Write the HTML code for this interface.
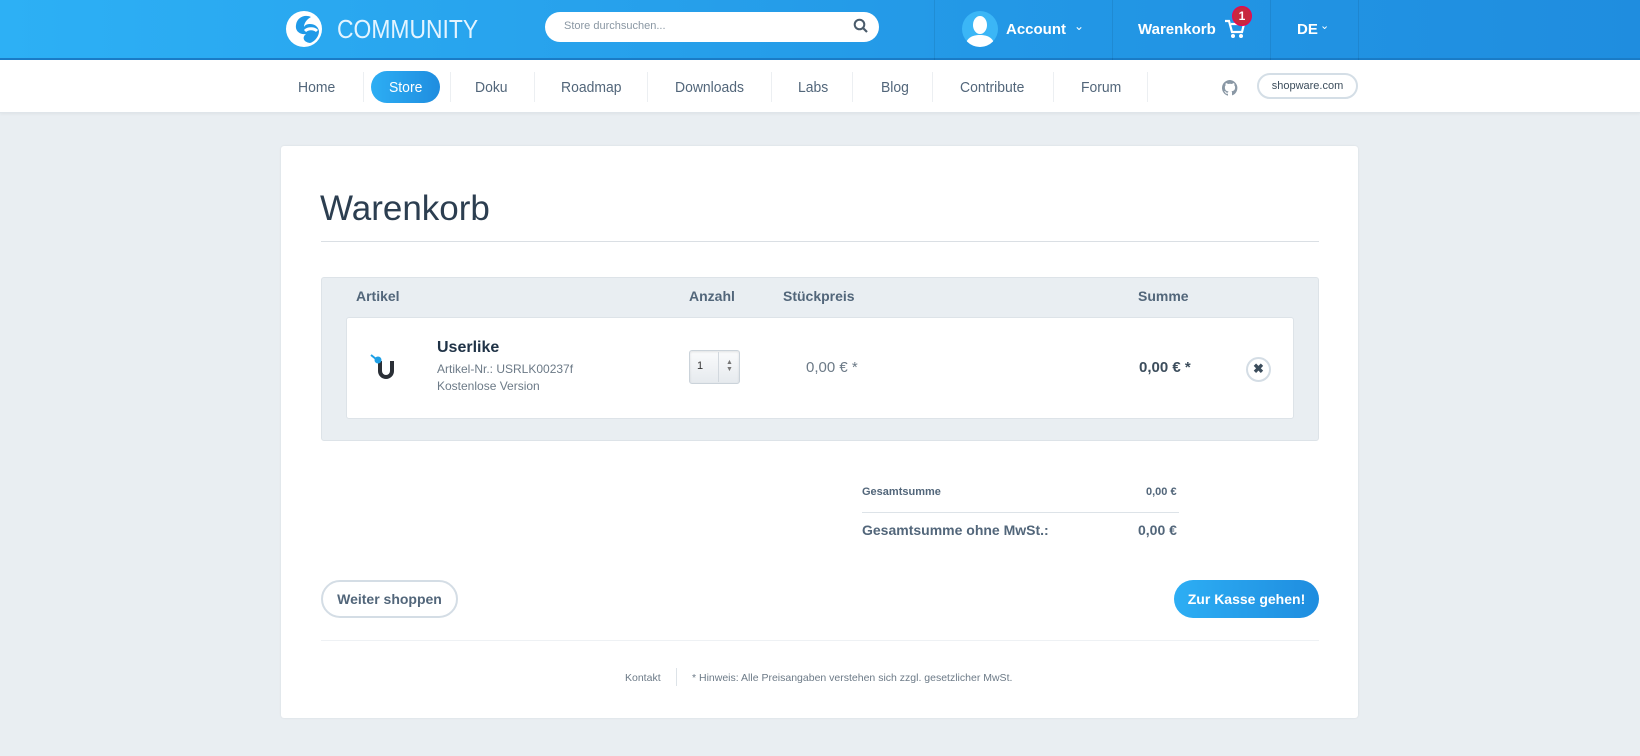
<!DOCTYPE html>
<html><head><meta charset="utf-8"><style>
*{margin:0;padding:0;box-sizing:border-box}
body{width:1640px;height:756px;background:#e9eef2;font-family:"Liberation Sans",sans-serif;position:relative;overflow:hidden;color:#52667a}
.a{position:absolute;white-space:nowrap}
#hdr{position:absolute;left:0;top:0;width:1640px;height:60px;background:linear-gradient(90deg,#2db0f5,#2398e6 60%,#1f8ddf);border-bottom:2px solid #1a7cc7}
#nav{position:absolute;left:0;top:60px;width:1640px;height:53px;background:#fff;border-bottom:1px solid #dfe5ea;box-shadow:0 1px 3px rgba(0,0,0,.05)}
.sep{position:absolute;top:72px;width:1px;height:30px;background:#eceff2}
.hsep{position:absolute;top:0;width:1px;height:60px;background:rgba(0,0,0,.08)}
.nl{position:absolute;top:79px;font-size:15px;color:#52667a;transform:scaleX(.93);transform-origin:left}
.w{color:#fff;font-weight:bold;font-size:15px}
#card{position:absolute;left:281px;top:146px;width:1077px;height:572px;background:#fff;border-radius:3px;box-shadow:0 0 2px rgba(0,0,0,.08)}
.btn{position:absolute;height:38px;border-radius:19px;font-size:14px;font-weight:bold;text-align:center;line-height:35px}
</style></head><body>
<div id="hdr"></div>
<svg class="a" style="left:285px;top:9px" width="40" height="40" viewBox="0 0 40 40"><circle cx="19" cy="20" r="18" fill="#fff"/><path d="M26 8c-6-3-14 0-15 8-1 6 4 10 10 9-4 3-3 8 4 9 4-1 9-6 9-12-1-5-5-7-9-7-3 0-5 1-6 3 0-4 3-8 7-10z" fill="#1f9ae8"/><path d="M20 22c3-3 9-3 12 0" stroke="#fff" stroke-width="3" fill="none"/></svg>
<div class="a" style="left:337px;top:14px;font-size:26px;color:#e3f4ff;transform:scaleX(.88);transform-origin:left">COMMUNITY</div>
<div class="a" style="left:545px;top:12px;width:334px;height:30px;background:#fff;border-radius:15px"></div>
<div class="a" style="left:564px;top:20px;font-size:11px;color:#8a97a3">Store durchsuchen...</div>
<svg class="a" style="left:853px;top:18px" width="16" height="16" viewBox="0 0 16 16"><circle cx="6.5" cy="6.5" r="4.8" stroke="#4a5b6b" stroke-width="2" fill="none"/><path d="M10 10l4 4" stroke="#4a5b6b" stroke-width="2.2"/></svg>
<div class="hsep" style="left:934px"></div><div class="hsep" style="left:1112px"></div><div class="hsep" style="left:1270px"></div><div class="hsep" style="left:1358px"></div>
<svg class="a" style="left:962px;top:11px" width="36" height="36" viewBox="0 0 36 36"><circle cx="18" cy="18" r="18" fill="#3bb6f6"/><clipPath id="c"><circle cx="18" cy="18" r="18"/></clipPath><g clip-path="url(#c)" fill="#fff"><ellipse cx="18" cy="14" rx="7" ry="9"/><path d="M3 36c1-9 7-12 15-12s14 3 15 12z"/></g></svg>
<div class="a w" style="left:1006px;top:21px">Account</div>
<div class="a" style="left:1074px;top:19px;color:#fff;font-size:12px">&#8964;</div>
<div class="a w" style="left:1138px;top:21px">Warenkorb</div>
<svg class="a" style="left:1224px;top:18px" width="22" height="22" viewBox="0 0 22 22"><path d="M1 3h4l3 11h10l2-8H7" stroke="#fff" stroke-width="2.2" fill="none"/><circle cx="9" cy="18" r="2" fill="#fff"/><circle cx="17" cy="18" r="2" fill="#fff"/></svg>
<div class="a" style="left:1232px;top:6px;width:20px;height:20px;border-radius:50%;background:#c8283e;border:1px solid #e05;color:#fff;font-size:12px;font-weight:bold;text-align:center;line-height:18px">1</div>
<div class="a w" style="left:1297px;top:21px">DE</div>
<div class="a" style="left:1320px;top:19px;color:#fff;font-size:11px">&#8964;</div>

<div id="nav"></div>
<div class="sep" style="left:363px"></div><div class="sep" style="left:450px"></div><div class="sep" style="left:534px"></div><div class="sep" style="left:647px"></div><div class="sep" style="left:771px"></div><div class="sep" style="left:852px"></div><div class="sep" style="left:932px"></div><div class="sep" style="left:1053px"></div><div class="sep" style="left:1147px"></div>
<div class="a" style="left:371px;top:71px;width:69px;height:32px;border-radius:16px;background:linear-gradient(90deg,#2daef4,#1f8ddf)"></div>
<div class="nl" style="left:298px">Home</div>
<div class="nl" style="left:389px;color:#fff">Store</div>
<div class="nl" style="left:475px">Doku</div>
<div class="nl" style="left:561px">Roadmap</div>
<div class="nl" style="left:675px">Downloads</div>
<div class="nl" style="left:798px">Labs</div>
<div class="nl" style="left:881px">Blog</div>
<div class="nl" style="left:960px">Contribute</div>
<div class="nl" style="left:1081px">Forum</div>
<svg class="a" style="left:1222px;top:80px" width="16" height="16" viewBox="0 0 16 16"><path fill="#8a98a5" d="M8 0a8 8 0 0 0-2.5 15.6c.4 0 .5-.2.5-.4v-1.5c-2.2.5-2.700-1-2.700-1-.4-.9-.9-1.200-.9-1.200-.7-.5.1-.5.1-.5.8.1 1.200.8 1.200.8.7 1.300 1.900.9 2.300.7.1-.5.3-.9.5-1.100-1.800-.2-3.600-.9-3.600-4 0-.9.3-1.600.8-2.100-.1-.2-.4-1 .1-2.100 0 0 .7-.2 2.200.8a7.5 7.5 0 0 1 4 0c1.500-1 2.200-.8 2.200-.8.4 1.100.2 1.900.1 2.100.5.6.8 1.300.8 2.100 0 3.100-1.900 3.700-3.600 3.900.3.3.5.7.5 1.400v2.200c0 .2.1.5.6.4A8 8 0 0 0 8 0z"/></svg>
<div class="a" style="left:1257px;top:73px;width:101px;height:26px;border:2px solid #d4dee6;border-radius:13px;font-size:11px;text-align:center;line-height:22px;color:#3c4d5c">shopware.com</div>

<div id="card"></div>
<div class="a" style="left:320px;top:189px;font-size:35px;color:#2c3e50">Warenkorb</div>
<div class="a" style="left:321px;top:241px;width:998px;height:1px;background:#dadfe4"></div>
<div class="a" style="left:321px;top:277px;width:998px;height:164px;background:#e9eef2;border:1px solid #dde3e8;border-radius:3px"></div>
<div class="a" style="left:356px;top:288px;font-size:14px;font-weight:bold;color:#52667a">Artikel</div>
<div class="a" style="left:689px;top:288px;font-size:14px;font-weight:bold;color:#52667a">Anzahl</div>
<div class="a" style="left:783px;top:288px;font-size:14px;font-weight:bold;color:#52667a">Stückpreis</div>
<div class="a" style="left:1138px;top:288px;font-size:14px;font-weight:bold;color:#52667a">Summe</div>
<div class="a" style="left:346px;top:317px;width:948px;height:102px;background:#fff;border:1px solid #dde3e8;border-radius:3px"></div>
<svg class="a" style="left:368px;top:350px" width="34" height="34" viewBox="0 0 34 34"><path d="M12 11v10a6 6 0 0 0 12 0V11" stroke="#2a2f36" stroke-width="4" fill="none"/><circle cx="10" cy="10" r="3.5" fill="#1ea0e6"/><path d="M3 5l5 4" stroke="#1ea0e6" stroke-width="2"/></svg>
<div class="a" style="left:437px;top:339px;font-size:16px;font-weight:bold;color:#1f3246">Userlike</div>
<div class="a" style="left:437px;top:362px;font-size:12px;color:#6c7a87">Artikel-Nr.: USRLK00237f</div>
<div class="a" style="left:437px;top:379px;font-size:12px;color:#6c7a87">Kostenlose Version</div>
<div class="a" style="left:689px;top:350px;width:51px;height:34px;border:1px solid #cbd3da;border-radius:3px;background:linear-gradient(#fafbfc,#e6eaee);box-shadow:inset 0 1px 2px rgba(0,0,0,.1)"></div>
<div class="a" style="left:718px;top:352px;width:1px;height:30px;background:#d2d8de"></div>
<div class="a" style="left:697px;top:360px;font-size:11px;color:#333">1</div>
<div class="a" style="left:726px;top:359px;font-size:7px;line-height:7px;color:#777">▲<br>▼</div>
<div class="a" style="left:806px;top:359px;font-size:15px;color:#6c7a87">0,00 € *</div>
<div class="a" style="left:1139px;top:359px;font-size:15px;font-weight:bold;color:#3c4d5c">0,00 € *</div>
<div class="a" style="left:1246px;top:357px;width:25px;height:25px;border:2px solid #d4dde5;border-radius:50%;text-align:center;line-height:20px;font-size:13px;font-weight:bold;color:#3c4d5c">✖</div>

<div class="a" style="left:862px;top:486px;font-size:11px;font-weight:bold;color:#52667a">Gesamtsumme</div>
<div class="a" style="left:1146px;top:486px;font-size:11px;font-weight:bold;color:#52667a">0,00 €</div>
<div class="a" style="left:862px;top:512px;width:317px;height:1px;background:#dde3e8"></div>
<div class="a" style="left:862px;top:522px;font-size:14px;font-weight:bold;color:#52667a">Gesamtsumme ohne MwSt.:</div>
<div class="a" style="left:1138px;top:522px;font-size:14px;font-weight:bold;color:#52667a">0,00 €</div>

<div class="btn" style="left:321px;top:580px;width:137px;border:2px solid #d4dde5;color:#52667a">Weiter shoppen</div>
<div class="btn" style="left:1174px;top:580px;width:145px;background:linear-gradient(90deg,#2daef4,#1f8ddf);color:#fff;line-height:38px">Zur Kasse gehen!</div>
<div class="a" style="left:321px;top:640px;width:998px;height:1px;background:#eef1f4"></div>
<div class="a" style="left:625px;top:672px;font-size:10.5px;color:#6c7a87">Kontakt</div>
<div class="a" style="left:676px;top:668px;width:1px;height:18px;background:#dde3e8"></div>
<div class="a" style="left:692px;top:672px;font-size:10.5px;color:#6c7a87">* Hinweis: Alle Preisangaben verstehen sich zzgl. gesetzlicher MwSt.</div>
</body></html>
